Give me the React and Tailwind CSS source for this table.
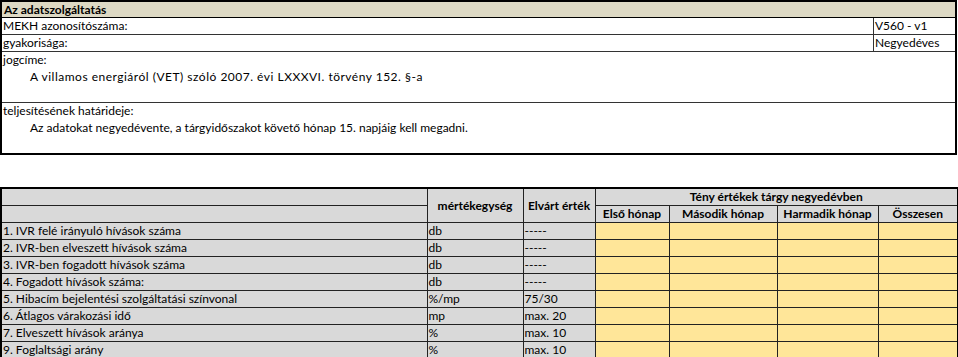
import React from "react";

const ROWS = [
  ["1. IVR felé irányuló hívások száma", "db", "-----"],
  ["2. IVR-ben elveszett hívások száma", "db", "-----"],
  ["3. IVR-ben fogadott hívások száma", "db", "-----"],
  ["4. Fogadott hívások száma:", "db", "-----"],
  ["5. Hibacím bejelentési szolgáltatási színvonal", "%/mp", "75/30"],
  ["6. Átlagos várakozási idő", "mp", "max. 20"],
  ["7. Elveszett hívások aránya", "%", "max. 10"],
  ["9. Foglaltsági arány", "%", "max. 10"],
];

const MONTHS = ["Első hónap", "Második hónap", "Harmadik hónap", "Összesen"];

function InfoBox() {
  return (
    <div className="w-[957px] h-[155px] border-2 border-black flex flex-col">
      <div className="h-[16px] shrink-0 bg-[#ddd9c4] border-b border-black font-bold px-[2px] leading-[15px]">Az adatszolgáltatás</div>
      <div className="h-[17px] shrink-0 flex border-b border-[#333]">
        <div className="flex-1 px-[1px]">MEKH azonosítószáma:</div>
        <div className="w-[82px] border-l border-[#333] px-[1px]">V560 - v1</div>
      </div>
      <div className="h-[17px] shrink-0 flex border-b border-[#333]">
        <div className="flex-1 px-[1px]">gyakorisága:</div>
        <div className="w-[82px] border-l border-[#333] px-[1px]">Negyedéves</div>
      </div>
      <div className="h-[51px] shrink-0 border-b border-[#333] px-[1px]">
        <div className="h-[17px]">jogcíme:</div>
        <div className="h-[17px] pl-[27px] tracking-[0.5px]">A villamos energiáról (VET) szóló 2007. évi LXXXVI. törvény 152. §-a</div>
      </div>
      <div className="flex-1 px-[1px]">
        <div className="h-[17px]">teljesítésének határideje:</div>
        <div className="h-[17px] pl-[27px]">Az adatokat negyedévente, a tárgyidőszakot követő hónap 15. napjáig kell megadni.</div>
      </div>
    </div>
  );
}

function DataTable() {
  const th = "bg-[#d9d9d9] border border-[#222] font-bold text-center p-0 align-middle";
  const td = "border border-[#222] px-[1px] py-0 text-left font-normal";
  return (
    <table className="w-[957px] table-fixed border-collapse border-2 border-black">
      <colgroup>
        <col className="w-[426px]" />
        <col className="w-[96px]" />
        <col className="w-[72px]" />
        <col className="w-[74px]" />
        <col className="w-[108px]" />
        <col className="w-[101px]" />
        <col className="w-[80px]" />
      </colgroup>
      <thead>
        <tr className="h-[17px]">
          <th className={th}></th>
          <th rowSpan={2} className={th}>mértékegység</th>
          <th rowSpan={2} className={th}>Elvárt érték</th>
          <th colSpan={4} className={th}>Tény értékek tárgy negyedévben</th>
        </tr>
        <tr className="h-[17px]">
          <th className={th}></th>
          {MONTHS.map((m) => (
            <th key={m} className={th}>{m}</th>
          ))}
        </tr>
      </thead>
      <tbody>
        {ROWS.map(([name, unit, exp]) => (
          <tr key={name} className="h-[17px]">
            <td className={`${td} bg-[#d9d9d9]`}>{name}</td>
            <td className={`${td} bg-[#d9d9d9]`}>{unit}</td>
            <td className={`${td} bg-[#d9d9d9]`}>{exp}</td>
            {MONTHS.map((m) => (
              <td key={m} className={`${td} bg-[#ffe699]`}></td>
            ))}
          </tr>
        ))}
      </tbody>
    </table>
  );
}

export default function App() {
  return (
    <div className="w-[958px] h-[357px] overflow-hidden bg-white text-black text-[12px] leading-[16px] font-['Lato',sans-serif]">
      <InfoBox />
      <div className="h-[32px]" />
      <DataTable />
    </div>
  );
}
